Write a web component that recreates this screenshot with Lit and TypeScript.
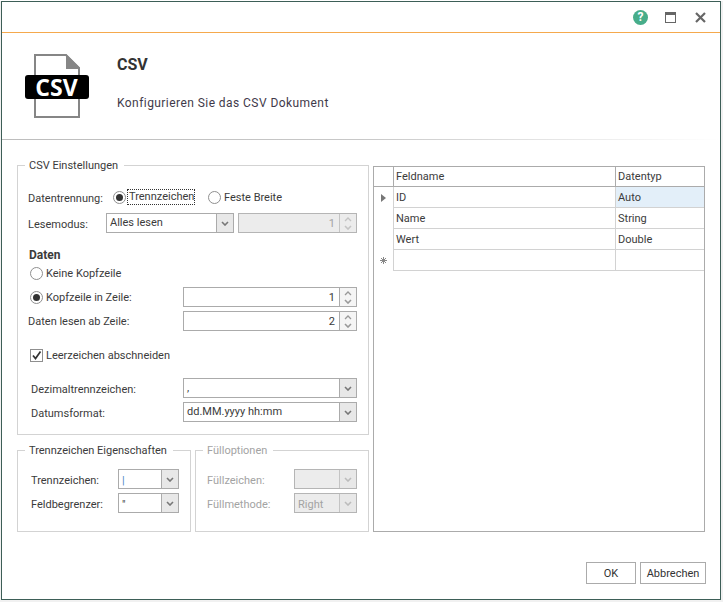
import { LitElement, html, css, svg } from "lit";
import { customElement } from "lit/decorators.js";

const chevronDown = svg`<path d="M1 1 L4 4 L7 1" fill="none" stroke="currentColor" stroke-width="1.6" />`;
const chevronUp = svg`<path d="M1 4 L4 1 L7 4" fill="none" stroke="currentColor" stroke-width="1.3" />`;

@customElement("app-root")
export class AppRoot extends LitElement {
    static styles = css`
        :host {
            display: block;
            width: 723px;
            height: 602px;
            font-family: Roboto, "Liberation Sans", sans-serif;
            font-size: 11px;
            color: #3b3b3b;
            background: #f1f1f1;
        }

        .window {
            box-sizing: border-box;
            margin: 1px 0 0 1px;
            width: 720px;
            height: 599px;
            border: 1px solid #3d5e57;
            background: #fff;
            display: flex;
            flex-direction: column;
        }

        .titlebar {
            height: 30px;
            flex: none;
            border-bottom: 1px solid #f5a94d;
            display: flex;
            justify-content: flex-end;
            align-items: center;
            gap: 19px;
            padding-right: 14px;
        }
        .titlebar svg {
            display: block;
        }
        .help {
            width: 15px;
            height: 15px;
            border-radius: 50%;
            background: #47ad8a;
            color: #fff;
            font-size: 12px;
            font-weight: 700;
            line-height: 15px;
            text-align: center;
            margin-right: -2px;
        }

        .header {
            height: 106px;
            flex: none;
            display: flex;
            position: relative;
        }
        .header::after {
            content: "";
            position: absolute;
            left: 0;
            right: 0;
            bottom: -1px;
            height: 1px;
            background: linear-gradient(to right, #bdbdbd 0%, #c8c8c8 50%, #fff 100%);
        }
        .logo {
            position: relative;
            width: 64px;
            height: 64px;
            margin: 21px 0 0 23px;
            flex: none;
        }
        .logo svg {
            display: block;
        }
        .logo span {
            position: absolute;
            left: -1px;
            right: 0;
            top: 21px;
            height: 24px;
            line-height: 24px;
            text-align: center;
            color: #fff;
            font-size: 23px;
            font-weight: 700;
            font-family: "Open Sans", sans-serif;
        }
        .heading {
            margin-left: 28px;
        }
        .heading h1 {
            margin: 22px 0 0;
            font-size: 16px;
            line-height: 20px;
            font-weight: 700;
            color: #333;
        }
        .heading p {
            margin: 20px 0 0;
            font-size: 12px;
            line-height: 16px;
            letter-spacing: 0.44px;
            color: #3f3a4a;
        }

        .body {
            flex: 1;
            display: flex;
            gap: 4px;
            padding: 18px 14px 0 15px;
            margin-top: 1px;
        }
        .left {
            width: 352px;
            flex: none;
            display: flex;
            flex-direction: column;
            gap: 8px;
        }
        .bottom-groups {
            display: flex;
            gap: 4px;
        }

        fieldset {
            margin: 0;
            min-width: 0;
            box-sizing: border-box;
            border: 1px solid #d3d3d3;
            padding: 0 10px 0 10px;
        }
        legend {
            margin-left: -3px;
            padding: 0 6px 0 4px;
            height: 14px;
            line-height: 16px;
            white-space: nowrap;
        }
        .main-group {
            height: 277px;
            padding-top: 15px;
        }
        .small-group {
            width: 174px;
            flex: none;
            height: 89px;
            padding: 12px 10px 0 13px;
        }
        .small-group legend {
            margin-left: -6px;
        }
        .small-group .row + .row {
            margin-top: 4px;
        }
        .small-group .caption {
            width: 87px;
            padding-top: 3px;
        }
        .small-group .field .value {
            line-height: 21px;
        }
        .small-group.disabled {
            padding-left: 11px;
        }
        .small-group.disabled legend {
            margin-left: -4px;
        }
        .disabled,
        .disabled legend {
            color: #a3a3a3;
        }

        .row {
            display: flex;
            align-items: center;
            height: 20px;
        }
        .row.gap-6 {
            margin-top: 6px;
        }
        .row.gap-4 {
            margin-top: 4px;
        }
        .caption {
            flex: none;
            white-space: nowrap;
        }
        .w85 {
            width: 85px;
            padding-top: 2px;
        }
        .w78 {
            width: 78px;
            padding-top: 2px;
        }
        .w155 {
            width: 155px;
        }
        .inset {
            margin-left: 2px;
        }
        .w153 {
            width: 153px;
        }
        .deep {
            margin-left: 3px;
            width: 152px;
            padding-top: 2px;
        }
        .section {
            margin-top: 14px;
            height: 16px;
            line-height: 16px;
            font-size: 12px;
            font-weight: 700;
            padding-left: 1px;
        }

        .option {
            display: inline-flex;
            align-items: center;
            gap: 3px;
            white-space: nowrap;
        }
        .second {
            margin-left: 14px;
        }
        .radio {
            width: 11px;
            height: 11px;
            flex: none;
            border: 1px solid #8f8f8f;
            border-radius: 50%;
            background: #fff;
            display: flex;
            align-items: center;
            justify-content: center;
        }
        .radio.on::after {
            content: "";
            width: 7px;
            height: 7px;
            border-radius: 50%;
            background: #333;
        }
        .focus {
            box-sizing: border-box;
            width: 66px;
            margin-left: -1px;
            outline: 1px dotted #333;
            outline-offset: 0;
            line-height: 14px;
            padding-left: 1px;
        }
        .check {
            width: 11px;
            height: 11px;
            flex: none;
            border: 1px solid #8f8f8f;
            background: #fff;
        }
        .check svg {
            display: block;
        }

        .field {
            box-sizing: border-box;
            height: 20px;
            border: 1px solid #ababab;
            background: #fff;
            display: flex;
            align-items: stretch;
            flex: none;
        }
        .field .value {
            flex: 1;
            min-width: 0;
            padding: 0 3px;
            line-height: 18px;
            white-space: nowrap;
            overflow: hidden;
        }
        .field .value.num {
            text-align: right;
            padding-right: 4px;
            line-height: 19px;
        }
        .pipe {
            color: #4f86c6;
        }
        .field.off {
            background: #ececec;
            border-color: #b5b5b5;
            color: #a3a3a3;
        }
        .arrow {
            width: 16px;
            flex: none;
            border-left: 1px solid #ababab;
            background: #e8e8e8;
            color: #777;
            display: flex;
            align-items: center;
            justify-content: center;
        }
        .off .arrow {
            border-left-color: #c4c4c4;
            color: #bcbcbc;
        }
        .spin {
            width: 16px;
            flex: none;
            border-left: 1px solid #ababab;
            background: #f5f5f5;
            color: #999;
            display: flex;
            flex-direction: column;
            align-items: center;
            justify-content: center;
            gap: 3px;
        }
        .off .spin {
            background: #ececec;
            border-left-color: #c4c4c4;
            color: #c4c4c4;
        }

        .w128 {
            width: 128px;
        }
        .w119 {
            width: 119px;
            margin-left: 4px;
        }
        .w174 {
            width: 174px;
        }
        .w61 {
            width: 61px;
        }
        .w63 {
            width: 63px;
        }

        .table {
            box-sizing: border-box;
            width: 332px;
            height: 366px;
            margin-top: 8px;
            border: 1px solid #ababab;
            display: grid;
            grid-template-columns: 19px 222px 1fr;
            grid-template-rows: 20px repeat(4, 21px);
            align-content: start;
        }
        .cell {
            box-sizing: border-box;
            border-bottom: 1px solid #d2d2d2;
            border-left: 1px solid #d2d2d2;
            padding: 1px 0 0 2px;
            line-height: 20px;
            white-space: nowrap;
        }
        .head {
            border-bottom-color: #ababab;
            border-left-color: #ababab;
            line-height: 18px;
        }
        .corner {
            border-bottom: 1px solid #ababab;
        }
        .indicator {
            display: flex;
            align-items: center;
            justify-content: center;
        }
        .current {
            background: #e3eff9;
        }

        .footer {
            height: 37px;
            flex: none;
            display: flex;
            justify-content: flex-end;
            gap: 4px;
            padding-right: 14px;
        }
        button {
            box-sizing: border-box;
            height: 22px;
            border: 1px solid #ababab;
            background: #fff;
            color: #333;
            font: inherit;
            padding: 0;
        }
        .ok {
            width: 50px;
        }
        .cancel {
            width: 66px;
        }
    `;

    private combo(value: unknown, cls: string, off = false) {
        return html`<div class="field ${cls} ${off ? "off" : ""}">
            <div class="value">${value}</div>
            <div class="arrow"><svg width="8" height="5">${chevronDown}</svg></div>
        </div>`;
    }

    private spinner(value: string, cls: string, off = false) {
        return html`<div class="field ${cls} ${off ? "off" : ""}">
            <div class="value num">${value}</div>
            <div class="spin">
                <svg width="8" height="5">${chevronUp}</svg>
                <svg width="8" height="5">${chevronDown}</svg>
            </div>
        </div>`;
    }

    render() {
        return html`<div class="window">
            <div class="titlebar">
                <div class="help">?</div>
                <svg width="11" height="11" viewBox="0 0 11 11">
                    <rect x="0.5" y="0.5" width="10" height="10" fill="none" stroke="#666" />
                    <rect x="0" y="0" width="11" height="3" fill="#666" />
                </svg>
                <svg width="11" height="11" viewBox="0 0 11 11">
                    <path d="M1 1 L10 10 M10 1 L1 10" stroke="#666" stroke-width="2.2" />
                </svg>
            </div>
            <div class="header">
                <div class="logo">
                    <svg width="64" height="64" viewBox="0 0 64 64">
                        <path d="M10 1 H41 L54 14 V63 H10 Z" fill="#fff" stroke="#868686" stroke-width="2" />
                        <path d="M41 0 L55 14 V15 H41 Z" fill="#868686" />
                        <rect x="0" y="21" width="64" height="24" rx="3" fill="#000" />
                    </svg>
                    <span>CSV</span>
                </div>
                <div class="heading">
                    <h1>CSV</h1>
                    <p>Konfigurieren Sie das CSV Dokument</p>
                </div>
            </div>
            <div class="body">
                <div class="left">
                    <fieldset class="main-group">
                        <legend>CSV Einstellungen</legend>
                        <div class="row">
                            <span class="caption w85">Datentrennung:</span>
                            <span class="option">
                                <span class="radio on"></span><span class="focus">Trennzeichen</span>
                            </span>
                            <span class="option second"><span class="radio"></span>Feste Breite</span>
                        </div>
                        <div class="row gap-6">
                            <span class="caption w78">Lesemodus:</span>
                            ${this.combo("Alles lesen", "w128")}
                            ${this.spinner("1", "w119", true)}
                        </div>
                        <div class="section">Daten</div>
                        <div class="row">
                            <span class="option inset"><span class="radio"></span>Keine Kopfzeile</span>
                        </div>
                        <div class="row" style="margin-top:4px">
                            <span class="option inset w153"><span class="radio on"></span>Kopfzeile in Zeile:</span>
                            ${this.spinner("1", "w174")}
                        </div>
                        <div class="row gap-4">
                            <span class="caption w155">Daten lesen ab Zeile:</span>
                            ${this.spinner("2", "w174")}
                        </div>
                        <div class="row" style="margin-top:14px">
                            <span class="option inset">
                                <span class="check">
                                    <svg width="11" height="11" viewBox="0 0 11 11">
                                        <path d="M2 5.5 L4.5 8.5 L9.5 1.5" fill="none" stroke="#333" stroke-width="1.7" />
                                    </svg>
                                </span>
                                Leerzeichen abschneiden
                            </span>
                        </div>
                        <div class="row" style="margin-top:13px">
                            <span class="caption deep">Dezimaltrennzeichen:</span>
                            ${this.combo(",", "w174")}
                        </div>
                        <div class="row gap-4">
                            <span class="caption deep">Datumsformat:</span>
                            ${this.combo("dd.MM.yyyy hh:mm", "w174")}
                        </div>
                    </fieldset>
                    <div class="bottom-groups">
                        <fieldset class="small-group">
                            <legend>Trennzeichen Eigenschaften</legend>
                            <div class="row">
                                <span class="caption">Trennzeichen:</span>
                                ${this.combo(html`<span class="pipe">|</span>`, "w61")}
                            </div>
                            <div class="row">
                                <span class="caption">Feldbegrenzer:</span>
                                ${this.combo('"', "w61")}
                            </div>
                        </fieldset>
                        <fieldset class="small-group disabled">
                            <legend>Fülloptionen</legend>
                            <div class="row">
                                <span class="caption">Füllzeichen:</span>
                                ${this.combo("", "w63", true)}
                            </div>
                            <div class="row">
                                <span class="caption">Füllmethode:</span>
                                ${this.combo("Right", "w63", true)}
                            </div>
                        </fieldset>
                    </div>
                </div>
                <div class="table">
                    <div class="corner"></div>
                    <div class="cell head">Feldname</div>
                    <div class="cell head">Datentyp</div>

                    <div class="indicator">
                        <svg width="5" height="8"><path d="M0 0 L5 4 L0 8 Z" fill="#777" /></svg>
                    </div>
                    <div class="cell">ID</div>
                    <div class="cell current">Auto</div>

                    <div class="indicator"></div>
                    <div class="cell">Name</div>
                    <div class="cell">String</div>

                    <div class="indicator"></div>
                    <div class="cell">Wert</div>
                    <div class="cell">Double</div>

                    <div class="indicator">
                        <svg width="7" height="7" viewBox="0 0 7 7">
                            <path d="M3.5 0 V7 M0 3.5 H7 M1 1 L6 6 M6 1 L1 6" stroke="#888" stroke-width="1" />
                        </svg>
                    </div>
                    <div class="cell"></div>
                    <div class="cell"></div>
                </div>
            </div>
            <div class="footer">
                <button class="ok">OK</button>
                <button class="cancel">Abbrechen</button>
            </div>
        </div>`;
    }
}
